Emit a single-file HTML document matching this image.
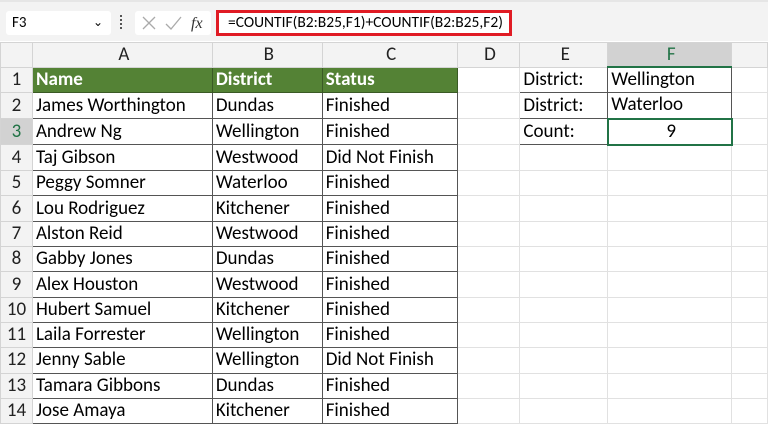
<!DOCTYPE html>
<html><head><style>
body{margin:0;width:768px;height:422px;overflow:hidden;background:#fff;font-family:Calibri,"Liberation Sans",sans-serif;position:relative}
.top{position:absolute;left:0;top:0;width:768px;height:41px;background:#f3f3f3;border-top:2px solid #e6e6e6;box-sizing:border-box}
.nb{position:absolute;left:6px;top:9px;width:105px;height:24px;background:#fff;border-radius:3px;font-size:15px;line-height:24px;padding-left:6px;box-sizing:border-box}
.fx{position:absolute;left:135px;top:9px;width:76px;height:24px;background:#fff;border-radius:3px}
.fb{position:absolute;left:216px;top:8px;width:296px;height:26px;border:3px solid #e01b24;background:#fff;box-sizing:border-box;font-size:15.5px;line-height:20px;padding-left:9px;white-space:nowrap}
table{position:absolute;left:0;top:42px;border-collapse:collapse;table-layout:fixed;font-size:19px}
td{height:24.3px;line-height:20px;padding:0 0 0 3px;border:1px solid #e1e1e1;white-space:nowrap;overflow:hidden;color:#000}
tr.h td{background:#f3f3f3;text-align:center;height:23px;border-color:#d4d4d4;color:#222}
td.r{background:#f3f3f3;text-align:center;padding:0;color:#222;border-color:#d4d4d4}
tr.g td.d{background:#548235;color:#fff;font-weight:bold;border-color:#3a5a25}
td.d{border:1px solid #555}
td.e{border:1px solid #555}
</style></head><body>
<div class="top">
<div class="nb">F3<span style="position:absolute;right:8px;top:0;font-size:12px">&#8964;</span></div>
<div style="position:absolute;left:120px;top:13px;width:2px;height:14px;border-left:2px dotted #555"></div>
<div class="fx">
<svg width="76" height="24"><path d="M8 6 L20 18 M20 6 L8 18" stroke="#aaa" stroke-width="1.3"/><path d="M31 13 L36 18 L46 6" stroke="#aaa" stroke-width="1.3" fill="none"/><text x="56" y="17" font-family="Liberation Serif" font-style="italic" font-size="16" fill="#333">fx</text></svg>
</div>
<div class="fb">=COUNTIF(B2:B25,F1)+COUNTIF(B2:B25,F2)</div>
</div>
<table>
<colgroup><col style="width:32px"><col style="width:180px"><col style="width:110px"><col style="width:135px"><col style="width:63px"><col style="width:88px"><col style="width:124px"><col style="width:36px"></colgroup>
<tr class="h"><td class="r"></td><td>A</td><td>B</td><td>C</td><td>D</td><td>E</td><td style="background:#d2d2d2;color:#217346;border-bottom:2px solid #217346">F</td><td></td></tr>
<tr class="g"><td class="r">1</td><td class="d">Name</td><td class="d">District</td><td class="d">Status</td><td></td><td class="e">District:</td><td class="e">Wellington</td><td></td></tr>
<tr><td class="r">2</td><td class="d">James Worthington</td><td class="d">Dundas</td><td class="d">Finished</td><td></td><td class="e">District:</td><td class="e">Waterloo</td><td></td></tr>
<tr><td class="r" style="background:#d2d2d2;color:#217346">3</td><td class="d">Andrew Ng</td><td class="d">Wellington</td><td class="d">Finished</td><td></td><td class="e">Count:</td><td style="border:2px solid #217346;text-align:center">9</td><td></td></tr>
<tr><td class="r">4</td><td class="d">Taj Gibson</td><td class="d">Westwood</td><td class="d">Did Not Finish</td><td></td><td></td><td></td><td></td></tr>
<tr><td class="r">5</td><td class="d">Peggy Somner</td><td class="d">Waterloo</td><td class="d">Finished</td><td></td><td></td><td></td><td></td></tr>
<tr><td class="r">6</td><td class="d">Lou Rodriguez</td><td class="d">Kitchener</td><td class="d">Finished</td><td></td><td></td><td></td><td></td></tr>
<tr><td class="r">7</td><td class="d">Alston Reid</td><td class="d">Westwood</td><td class="d">Finished</td><td></td><td></td><td></td><td></td></tr>
<tr><td class="r">8</td><td class="d">Gabby Jones</td><td class="d">Dundas</td><td class="d">Finished</td><td></td><td></td><td></td><td></td></tr>
<tr><td class="r">9</td><td class="d">Alex Houston</td><td class="d">Westwood</td><td class="d">Finished</td><td></td><td></td><td></td><td></td></tr>
<tr><td class="r">10</td><td class="d">Hubert Samuel</td><td class="d">Kitchener</td><td class="d">Finished</td><td></td><td></td><td></td><td></td></tr>
<tr><td class="r">11</td><td class="d">Laila Forrester</td><td class="d">Wellington</td><td class="d">Finished</td><td></td><td></td><td></td><td></td></tr>
<tr><td class="r">12</td><td class="d">Jenny Sable</td><td class="d">Wellington</td><td class="d">Did Not Finish</td><td></td><td></td><td></td><td></td></tr>
<tr><td class="r">13</td><td class="d">Tamara Gibbons</td><td class="d">Dundas</td><td class="d">Finished</td><td></td><td></td><td></td><td></td></tr>
<tr><td class="r">14</td><td class="d">Jose Amaya</td><td class="d">Kitchener</td><td class="d">Finished</td><td></td><td></td><td></td><td></td></tr>
</table>
</body></html>
